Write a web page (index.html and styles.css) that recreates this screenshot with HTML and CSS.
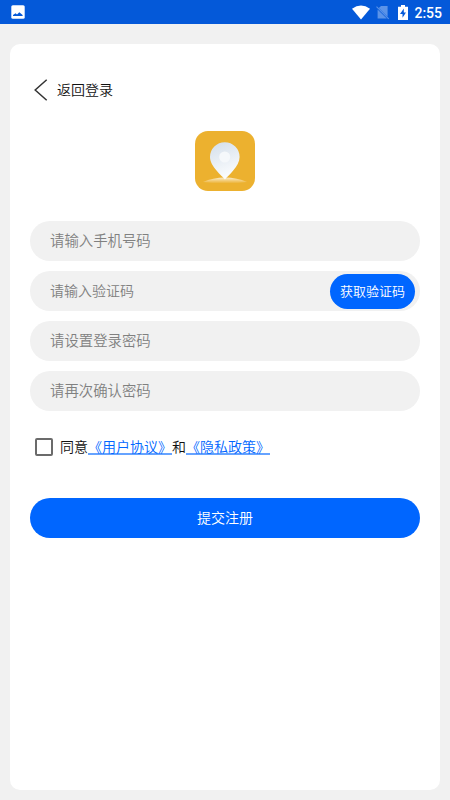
FILE: index.html
```
<!DOCTYPE html>
<html lang="zh-CN">
<head>
<meta charset="UTF-8">
<meta name="viewport" content="width=device-width, initial-scale=1.0">
<title>注册</title>
<link rel="stylesheet" href="styles.css">
</head>
<body>

<div class="status-bar">
  <svg class="status-picture" width="14" height="14" viewBox="0 0 14 14">
    <rect x="0.3" y="0.3" width="13.4" height="13.4" rx="1.5" fill="#fff"/>
    <path d="M2 11 V9.9 L4.6 8.2 L6 9.6 L8.3 7.2 L11.6 10 V11 Z" fill="#0459d9"/>
  </svg>
  <div class="status-icons">
    <svg width="18" height="15" viewBox="0 0 18 15">
      <path d="M0 3.7 Q9 -2.7 18 3.7 L9 14.6 Z" fill="#fff"/>
    </svg>
    <svg class="status-sim" width="14" height="15" viewBox="0 0 14 15">
      <path d="M5 1 H11.6 V11.8 L2.8 3 Z M1.6 4.5 L10.8 13.5 H1.6 Z" fill="#5b93e8"/>
      <path d="M0.5 1.7 L12.7 13.9" stroke="#5b93e8" stroke-width="1.1"/>
    </svg>
    <svg class="status-battery" width="10" height="15" viewBox="0 0 10 15">
      <path d="M0 1.7 H3 V0 H7 V1.7 H10 V15 H0 Z" fill="#fff"/>
      <path d="M5.8 3.5 L2 9 H4.5 V12.8 L8 7.5 H5.8 Z" fill="#0459d9"/>
    </svg>
    <span class="status-time">2:55</span>
  </div>
</div>

<div class="container">
  <a class="back">
    <svg width="14" height="22" viewBox="0 0 14 22">
      <path d="M12.7 0.8 L1.2 11 L12.7 21.2" fill="none" stroke="#333" stroke-width="1.5"/>
    </svg>
    <span>返回登录</span>
  </a>

  <svg class="logo" width="60" height="60" viewBox="0 0 60 60">
    <defs>
      <linearGradient id="pin" x1="0" y1="0" x2="0.3" y2="1">
        <stop offset="0" stop-color="#d3deea"/>
        <stop offset="1" stop-color="#fafcfe"/>
      </linearGradient>
      <linearGradient id="glow" x1="0" y1="0" x2="0" y2="1">
        <stop offset="0" stop-color="#fff" stop-opacity="0.75"/>
        <stop offset="1" stop-color="#fff" stop-opacity="0"/>
      </linearGradient>
    </defs>
    <rect width="60" height="60" rx="13" fill="#ecb12f"/>
    <path d="M8 51 Q18 46.5 30 46.5 Q42 46.5 52 51 Q30 54 8 51 Z" fill="url(#glow)"/>
    <path d="M30 48.5 C27 44.5 15 35.5 15 26 A14.8 14.8 0 0 1 44.6 26 C44.6 35.5 33 44.5 30 48.5 Z" fill="url(#pin)"/>
    <circle cx="29.7" cy="26" r="5.5" fill="#f5f8fb"/>
  </svg>

  <form class="register-form">
    <div class="field">请输入手机号码</div>
    <div class="field field-code">
      <span>请输入验证码</span>
      <button type="button" class="code-button">获取验证码</button>
    </div>
    <div class="field">请设置登录密码</div>
    <div class="field">请再次确认密码</div>

    <div class="agreement">
      <span class="checkbox"></span>
      <span>同意<a class="link">《用户协议》</a>和<a class="link">《隐私政策》</a></span>
    </div>

    <button type="button" class="submit-button">提交注册</button>
  </form>
</div>

</body>
</html>
```
FILE: styles.css
```
* {
  box-sizing: border-box;
}
body {
  margin: 0;
  height: 800px;
  background-color: #f1f1f1;
  color: #111;
  font-family: Roboto, "Noto Sans CJK SC", sans-serif;
  font-size: 14px;
  font-weight: 350;
}
svg {
  display: block;
}
.status-bar {
  display: flex;
  justify-content: space-between;
  align-items: center;
  height: 24px;
  padding: 0 8px 0 11px;
  background-color: #0459d9;
}
.status-icons {
  display: flex;
  align-items: center;
}
.status-sim {
  margin-left: 6px;
}
.status-battery {
  margin-left: 8px;
}
.status-time {
  margin-left: 6px;
  padding-top: 2px;
  color: #fff;
  font-size: 14px;
  font-weight: 500;
  line-height: 20px;
}
.container {
  height: 746px;
  margin: 20px 10px 0;
  padding: 35px 20px 0;
  border-radius: 10px;
  background-color: #fff;
}
.back {
  display: flex;
  align-items: center;
  gap: 9px;
  height: 22px;
  padding-left: 4px;
  line-height: 22px;
}
.logo {
  margin: 30px auto;
}
.field {
  height: 40px;
  margin-bottom: 10px;
  padding-left: 20px;
  border-radius: 20px;
  background-color: #f1f1f1;
  color: #808080;
  font-size: 14.4px;
  line-height: 42px;
}
.field-code {
  display: flex;
  align-items: center;
  justify-content: space-between;
  padding-right: 5px;
  font-size: 14px;
  line-height: 40px;
}
button {
  padding: 0 0 2px;
  border: none;
  background-color: #0066ff;
  color: #fff;
  font-family: inherit;
  font-weight: 350;
}
.code-button {
  width: 85px;
  height: 35px;
  border-radius: 18px;
  font-size: 13px;
}
.agreement {
  display: flex;
  align-items: center;
  gap: 7px;
  height: 22px;
  margin-top: 25px;
  padding-left: 5px;
  line-height: 22px;
}
.checkbox {
  width: 18px;
  height: 18px;
  border: 2px solid #6b6b6b;
  border-radius: 2px;
}
.link {
  color: #0066ff;
  text-decoration: underline;
  text-decoration-color: #66a3ff;
  text-decoration-thickness: 2px;
  text-underline-offset: 1px;
}
.submit-button {
  display: block;
  width: 100%;
  height: 40px;
  margin-top: 40px;
  border-radius: 20px;
  font-size: 14px;
}
```
